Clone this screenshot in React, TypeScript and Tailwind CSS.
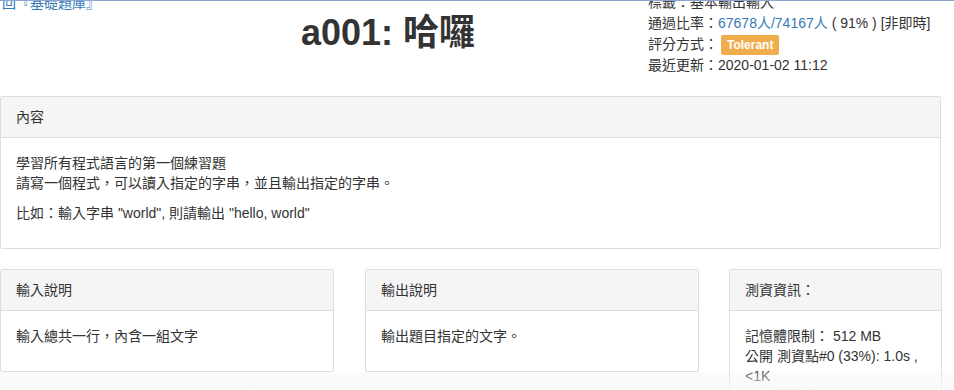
import React from "react";

const font = "font-['Liberation_Sans','Noto_Sans_CJK_TC',sans-serif]";

function Panel({
  title,
  className,
  children,
}: {
  title: string;
  className?: string;
  children: React.ReactNode;
}) {
  return (
    <div className={`border border-[#dddddd] rounded-[2px] bg-white ${className ?? ""}`}>
      <div className="bg-[#f5f5f5] border-b border-[#dddddd] px-[15px] py-[10px] leading-[20px] text-[14px] text-[#333]">
        {title}
      </div>
      <div className="px-[15px] pt-[15px] pb-[15px] text-[14px] leading-[20px] text-[#333]">{children}</div>
    </div>
  );
}

export default function App() {
  return (
    <div
      className={`relative h-[390px] w-[954px] overflow-hidden bg-white border-t border-[#8ea6cf] ${font} text-[#333]`}
    >
      {/* header */}
      <div className="flex h-[95px] items-start">
        <div className="flex w-[648px] flex-col">
          <a className="-mt-[8px] pl-[2px] text-[14px] leading-[20px] text-[#337ab7]">回『基礎題庫』</a>
          <h1 className="pl-[128px] text-center text-[36px] font-bold leading-[40px] text-[#333]">
            a001: 哈囉
          </h1>
        </div>
        <div className="-mt-[9px] flex flex-col text-[14px] leading-[21px] text-[#333]">
          <div>標籤：基本輸出輸入</div>
          <div className="whitespace-nowrap">
            通過比率：<span className="text-[#337ab7]">67678人/74167人</span> ( 91% ) [非即時]
          </div>
          <div className="flex items-center">
            <span>評分方式：</span>
            <span className="ml-[3px] inline-block h-[20px] rounded-[2px] bg-[#f0ad4e] px-[6px] text-[12px] font-bold leading-[20px] text-white">
              Tolerant
            </span>
          </div>
          <div>最近更新：2020-01-02 11:12</div>
        </div>
      </div>

      {/* content */}
      <Panel title="內容" className="w-[941px]">
        <p className="mb-[10px]">
          學習所有程式語言的第一個練習題
          <br />
          請寫一個程式，可以讀入指定的字串，並且輸出指定的字串。
        </p>
        <p className="mb-[10px]">比如：輸入字串 "world", 則請輸出 "hello, world"</p>
      </Panel>

      {/* bottom row */}
      <div className="mt-[20px] flex items-start">
        <Panel title="輸入說明" className="w-[334px]">
          <p className="mb-[10px]">輸入總共一行，內含一組文字</p>
        </Panel>
        <Panel title="輸出說明" className="ml-[31px] w-[334px]">
          <p className="mb-[10px]">輸出題目指定的文字。</p>
        </Panel>
        <Panel title="測資資訊：" className="ml-[30px] w-[213px]">
          <p className="mb-[10px]">
            記憶體限制： 512 MB
            <br />
            <span className="whitespace-nowrap">公開 測資點#0 (33%): 1.0s ,</span>
            <br />
            &lt;1K
            <br />
            公開 測資點#1 (33%): 1.0s ,
          </p>
        </Panel>
      </div>

      {/* bottom fade overlay */}
      <div className="pointer-events-none absolute bottom-0 left-0 h-[18px] w-full bg-gradient-to-b from-[rgba(240,240,240,0.25)] to-[rgba(248,248,248,0.8)]" />
    </div>
  );
}
